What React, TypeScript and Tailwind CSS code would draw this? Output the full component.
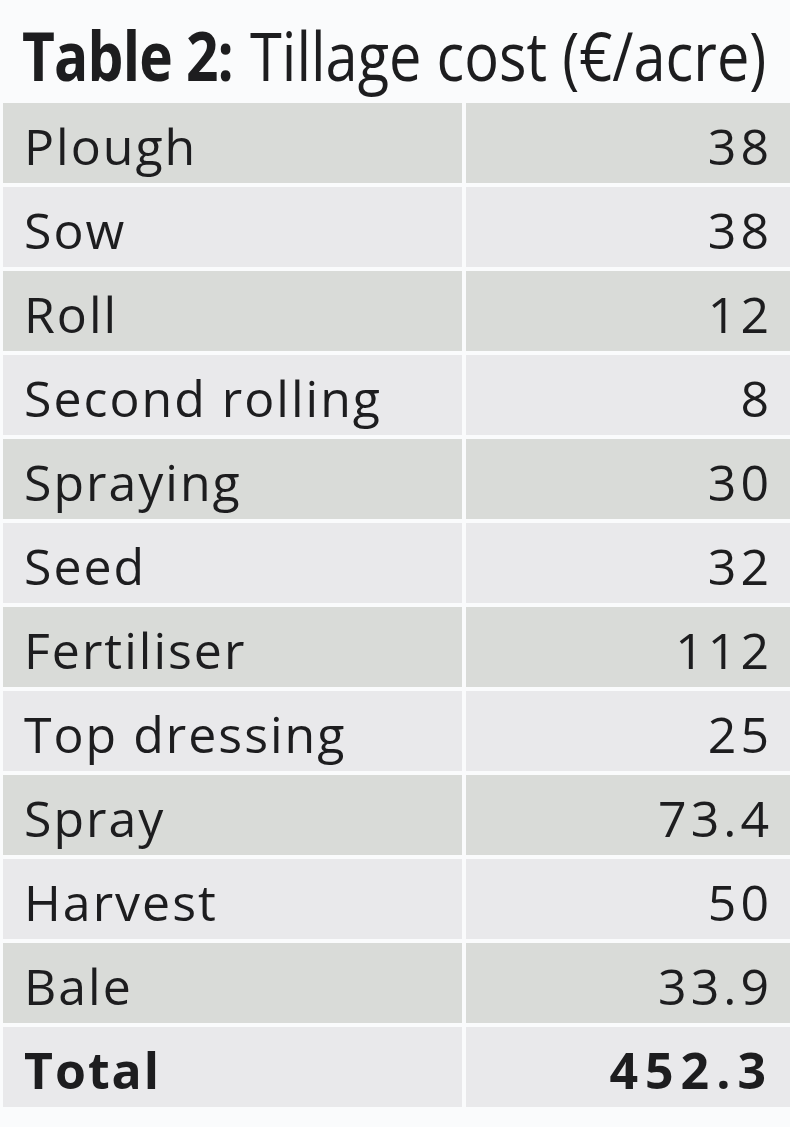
const ROWS: [string, string][] = [
  ["Plough", "38"],
  ["Sow", "38"],
  ["Roll", "12"],
  ["Second rolling", "8"],
  ["Spraying", "30"],
  ["Seed", "32"],
  ["Fertiliser", "112"],
  ["Top dressing", "25"],
  ["Spray", "73.4"],
  ["Harvest", "50"],
  ["Bale", "33.9"],
];

export default function App() {
  return (
    <div className="w-[790px] h-[1127px] overflow-hidden bg-[#fafbfc] text-[#1d1d1f] font-['Open_Sans',sans-serif]">
      {/* condensed title face isn't available, so squeeze Open Sans */}
      <h1 className="h-[103px] pl-[22px] pt-[15px] flex overflow-hidden text-[68px] leading-[80px] whitespace-nowrap">
        <span className="w-[228px] shrink-0">
          <span className="inline-block origin-left scale-x-[0.836] font-bold tracking-[-1px]">Table 2:</span>
        </span>
        <span className="shrink-0">
          <span className="inline-block origin-left scale-x-[0.85]">Tillage cost (€/acre)</span>
        </span>
      </h1>
      <div className="ml-[3px] flex flex-col gap-[4px]">
        {ROWS.map(([label, value], i) => (
          <Row key={label} label={label} value={value} dark={i % 2 === 0} />
        ))}
        <Row label="Total" value="452.3" dark={false} bold />
      </div>
    </div>
  );
}

function Row({ label, value, dark, bold }: { label: string; value: string; dark: boolean; bold?: boolean }) {
  const bg = dark ? "bg-[#d9dbd8]" : "bg-[#e9e9eb]";
  return (
    <div className={`flex h-[80px] gap-[4px] text-[50px] ${bold ? "font-bold" : ""}`}>
      <div className={`w-[459px] flex items-center pl-[21px] pt-[7px] tracking-[2px] ${bg}`}>{label}</div>
      <div
        className={`flex-1 flex items-center justify-end pr-[17px] pt-[7px] ${
          bold ? "tracking-[7px]" : "tracking-[4px]"
        } ${bg}`}
      >
        {value}
      </div>
    </div>
  );
}
